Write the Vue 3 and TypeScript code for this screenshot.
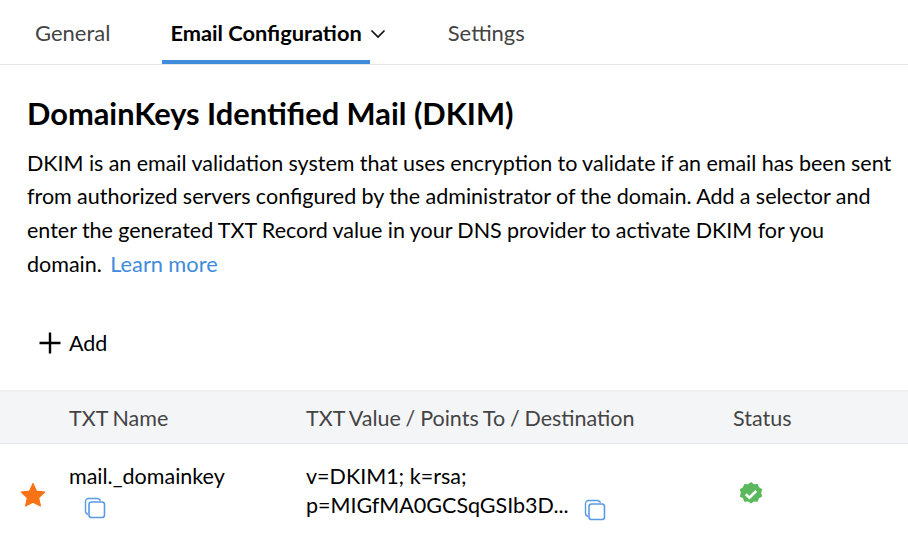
<script setup lang="ts">
const tabs = [
  { label: "General", active: false },
  { label: "Email Configuration", active: true },
  { label: "Settings", active: false },
];
</script>

<template>
  <div class="page">
    <nav class="tabs">
      <div v-for="tab in tabs" :key="tab.label" class="tab" :class="{ active: tab.active }">
        <span>{{ tab.label }}</span>
        <svg v-if="tab.active" class="chevron" width="16" height="10" viewBox="0 0 16 10">
          <path d="M1.5 1.5 8 8l6.5-6.5" fill="none" stroke="#111" stroke-width="1.7" />
        </svg>
      </div>
    </nav>

    <section class="intro">
      <h1>DomainKeys Identified Mail (DKIM)</h1>
      <p>
        DKIM is an email validation system that uses encryption to validate if an email has been sent
        from authorized servers configured by the administrator of the domain. Add a selector and
        enter the generated TXT Record value in your DNS provider to activate DKIM for you
        domain. <a>Learn more</a>
      </p>
    </section>

    <div class="add">
      <svg width="22" height="22" viewBox="0 0 22 22">
        <path d="M11 0.5v21M0.5 11h21" fill="none" stroke="#000" stroke-width="2.4" />
      </svg>
      <span>Add</span>
    </div>

    <div class="row head">
      <div class="c-name">TXT Name</div>
      <div class="c-value">TXT Value / Points To / Destination</div>
      <div class="c-status">Status</div>
    </div>

    <div class="row body">
      <svg class="star" width="26" height="26" viewBox="0 0 26 26">
        <path
          d="M13 1.600l3.500 7.600 8.300.9-6.200 5.600 1.800 8.200L13 20.100l-7.400 3.800 1.800-8.200-6.200-5.600 8.300-.9z"
          fill="#f97316"
          stroke="#f97316"
          stroke-width="1.200"
          stroke-linejoin="round"
        />
      </svg>
      <div class="c-name">
        <div>mail._domainkey</div>
        <svg class="copy name-copy" width="22" height="22" viewBox="0 0 22 22">
          <path d="M4 17.500C2.500 17 1.500 16 1.500 14V4.500a3 3 0 0 1 3-3H13c1.800 0 3 .8 3.500 2.300" fill="none" stroke="#5a9be6" stroke-width="1.400" />
          <rect x="5" y="5" width="15.500" height="15.500" rx="2.600" fill="none" stroke="#5a9be6" stroke-width="1.600" />
        </svg>
      </div>
      <div class="c-value">
        <div>v=DKIM1; k=rsa;</div>
        <div class="val-line">
          p=MIGfMA0GCSqGSIb3D...
          <svg class="copy" width="22" height="22" viewBox="0 0 22 22">
            <path d="M4 17.500C2.500 17 1.500 16 1.500 14V4.500a3 3 0 0 1 3-3H13c1.800 0 3 .8 3.500 2.300" fill="none" stroke="#5a9be6" stroke-width="1.400" />
            <rect x="5" y="5" width="15.500" height="15.500" rx="2.600" fill="none" stroke="#5a9be6" stroke-width="1.600" />
          </svg>
        </div>
      </div>
      <div class="c-status">
        <svg width="26" height="26" viewBox="0 0 26 26">
          <path
            d="M13 1l3 2.200 3.700-.3 1.300 3.400 3.200 1.900-1 3.600 1 3.600-3.200 1.900-1.300 3.400-3.700-.3-3 2.200-3-2.200-3.700.3-1.300-3.400-3.200-1.900 1-3.600-1-3.600 3.200-1.900 1.300-3.400 3.700.3z"
            fill="#5cb85c"
          />
          <path d="M7.800 13.200l3.600 3.400 6.800-6.600" fill="none" stroke="#fff" stroke-width="2.600" />
        </svg>
      </div>
    </div>
  </div>
</template>

<style>
html,
body {
  margin: 0;
  background: #fff;
}
</style>

<style scoped>
.page {
  width: 908px;
  height: 540px;
  overflow: hidden;
  font-family: Lato, "Open Sans", sans-serif;
  font-size: 21.5px;
  color: #000;
}
.tabs {
  display: flex;
  height: 64px;
  padding-left: 27px;
  gap: 44px;
  border-bottom: 1px solid #e6e6e6;
  font-size: 22px;
}
.tab {
  display: flex;
  align-items: center;
  gap: 8px;
  height: 64px;
  padding: 0 8px;
  box-sizing: border-box;
  color: #444;
  white-space: nowrap;
}
.tab.active {
  color: #000;
  font-size: 21.8px;
  font-weight: 700;
  border-bottom: 4px solid #3f8cdc;
  padding-top: 4px;
  margin-right: 26px;
}
.chevron {
  margin-right: -24px;
  margin-top: 3px;
}
.intro {
  padding: 29px 0 0 27px;
}
h1 {
  margin: 0;
  font-size: 30.8px;
  font-weight: 700;
  line-height: 40px;
}
p {
  margin: 13px 0 0;
  font-size: 21.5px;
  word-spacing: -0.2px;
  line-height: 33.4px;
  width: 875px;
}
a {
  margin-left: 3px;
  font-size: 21.8px;
  color: #3f8cdc;
}
.add {
  display: flex;
  align-items: center;
  gap: 8px;
  margin-top: 45px;
  padding-left: 39px;
  height: 32px;
}
.row {
  display: grid;
  grid-template-columns: 69px 237px 427px 1fr;
  position: relative;
}
.head {
  margin-top: 31px;
  height: 54px;
  box-sizing: border-box;
  padding-top: 2px;
  align-items: center;
  background: #f4f5f7;
  border-top: 2px solid #efefef;
  border-bottom: 1px solid #e6e6e6;
  color: #444;
  word-spacing: -0.7px;
}
.head .c-name {
  grid-column: 2;
}
.body {
  padding-top: 18px;
  line-height: 28px;
}
.star {
  position: absolute;
  left: 20px;
  top: 38px;
}
.body .c-name {
  grid-column: 2;
}
.name-copy {
  display: block;
  margin: 7px 0 0 15px;
}
.val-line {
  display: flex;
  gap: 15px;
  align-items: center;
}
.val-line .copy {
  margin-top: 9px;
}
.c-status svg {
  display: block;
  margin: 19px 0 0 5px;
}
</style>
